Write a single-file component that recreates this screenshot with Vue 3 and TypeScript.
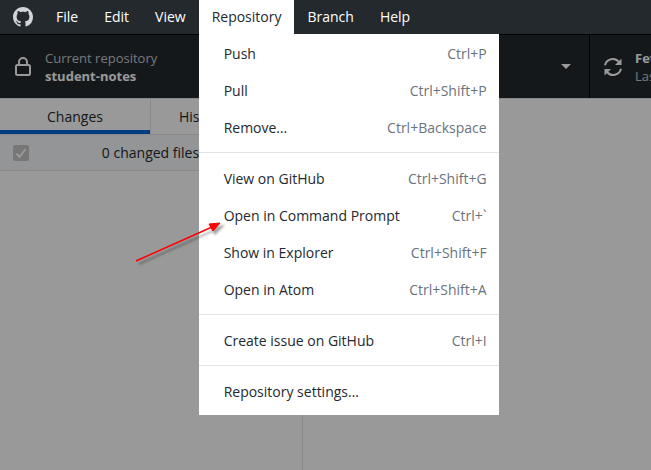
<script setup lang="ts">
interface MenuItem {
  label: string
  keys?: string
}

const before: string[] = ['File', 'Edit', 'View']
const after: string[] = ['Branch', 'Help']

const groups: MenuItem[][] = [
  [
    { label: 'Push', keys: 'Ctrl+P' },
    { label: 'Pull', keys: 'Ctrl+Shift+P' },
    { label: 'Remove…', keys: 'Ctrl+Backspace' },
  ],
  [
    { label: 'View on GitHub', keys: 'Ctrl+Shift+G' },
    { label: 'Open in Command Prompt', keys: 'Ctrl+`' },
    { label: 'Show in Explorer', keys: 'Ctrl+Shift+F' },
    { label: 'Open in Atom', keys: 'Ctrl+Shift+A' },
  ],
  [{ label: 'Create issue on GitHub', keys: 'Ctrl+I' }],
  [{ label: 'Repository settings…' }],
]
</script>

<template>
  <div class="window">
    <header class="titlebar">
      <svg class="logo" viewBox="0 0 16 16" aria-hidden="true">
        <path d="M8 0C3.58 0 0 3.58 0 8c0 3.54 2.29 6.53 5.47 7.59.4.07.55-.17.55-.38 0-.19-.01-.82-.01-1.49-2.01.37-2.53-.49-2.69-.94-.09-.23-.48-.94-.82-1.13-.28-.15-.68-.52-.01-.53.63-.01 1.08.58 1.23.82.72 1.21 1.87.87 2.33.66.07-.52.28-.87.51-1.07-1.78-.2-3.64-.89-3.64-3.95 0-.87.31-1.59.82-2.15-.08-.2-.36-1.02.08-2.12 0 0 .67-.21 2.2.82.64-.18 1.32-.27 2-.27s1.36.09 2 .27c1.53-1.04 2.2-.82 2.2-.82.44 1.1.16 1.92.08 2.12.51.56.82 1.27.82 2.15 0 3.07-1.87 3.75-3.65 3.95.29.25.54.73.54 1.48 0 1.07-.01 1.93-.01 2.2 0 .21.15.46.55.38A8.01 8.01 0 0 0 16 8c0-4.42-3.58-8-8-8z" />
      </svg>
      <nav class="menubar">
        <button v-for="name in before" :key="name" type="button" class="top">{{ name }}</button>
        <div class="holder">
          <button type="button" class="top open" aria-expanded="true">Repository</button>
          <div class="menu" role="menu">
            <div v-for="(group, i) in groups" :key="i" class="group" role="group">
              <button v-for="item in group" :key="item.label" type="button" class="item" role="menuitem">
                <span>{{ item.label }}</span>
                <span v-if="item.keys" class="keys">{{ item.keys }}</span>
              </button>
            </div>
          </div>
        </div>
        <button v-for="name in after" :key="name" type="button" class="top">{{ name }}</button>
      </nav>
    </header>

    <div class="app">
      <div class="toolbar">
        <button type="button" class="tool repo">
          <svg class="lock" viewBox="0 0 16 20" aria-hidden="true">
            <rect x="1" y="8" width="14" height="10" rx="1.5" />
            <path d="M4 8V5a4 4 0 0 1 8 0v3" />
          </svg>
          <span class="lines">
            <span class="dim">Current repository</span>
            <strong>student-notes</strong>
          </span>
        </button>
        <button type="button" class="tool branch">
          <svg class="caret" viewBox="0 0 10 5" aria-hidden="true"><path d="M0 0h10L5 5z" /></svg>
        </button>
        <button type="button" class="tool fetch">
          <svg class="sync" viewBox="0 0 20 20" aria-hidden="true">
            <path class="arc" d="M2 8.2A8 8 0 0 1 16 5M18 11.8A8 8 0 0 1 4 15" />
            <path class="tip" d="M18.500 1.500v6.500h-6.500zM1.500 18.500v-6.500h6.500z" />
          </svg>
          <span class="lines">
            <strong>Fetch origin</strong>
            <span class="dim">Last fetched</span>
          </span>
        </button>
      </div>

      <main class="body">
        <aside class="sidebar">
          <div class="tabs">
            <button type="button" class="tab active">Changes</button>
            <button type="button" class="tab history">History</button>
          </div>
          <div class="changes">
            <span class="box">
              <input id="all" type="checkbox" checked disabled />
              <svg viewBox="0 0 16 16" aria-hidden="true"><path d="M3.500 8.500l3 3.500L12.500 4" /></svg>
            </span>
            <label for="all">0 changed files</label>
          </div>
        </aside>
        <section class="content"></section>
      </main>
      <div class="shade"></div>
    </div>

    <svg class="pointer" viewBox="0 0 100 60" aria-hidden="true">
      <g class="shadow" transform="translate(3 3)">
        <path d="M6 51L82 17" />
        <path class="head" d="M90 13l-8 8-3-6z" />
      </g>
      <path class="shaft" d="M6 51L82 17" />
      <path class="arrowhead" d="M90 13l-7 8-4-7z" />
    </svg>
  </div>
</template>

<style>
body {
  margin: 0;
}
</style>

<style scoped>
.window {
  position: relative;
  display: flex;
  flex-direction: column;
  min-height: 100vh;
  overflow: hidden;
  font-family: 'Open Sans', 'Noto Sans', sans-serif;
  font-size: 14px;
  line-height: 18px;
  color: #24292e;
}
button {
  margin: 0;
  border: 0;
  padding: 0;
  background: none;
  font: inherit;
  color: inherit;
  text-align: left;
  white-space: nowrap;
}
.titlebar {
  display: flex;
  align-items: center;
  height: 34px;
  background: #24292e;
  border-bottom: 1px solid #000;
}
.logo {
  flex: none;
  width: 20px;
  height: 20px;
  margin: 0 10px 0 13px;
  fill: #d1d5da;
}
.menubar {
  display: flex;
  height: 34px;
}
.top {
  height: 34px;
  padding: 0 13px;
  color: #fff;
}
.holder {
  position: relative;
}
.top.open {
  background: #fff;
  color: #24292e;
}
.menu {
  position: absolute;
  z-index: 3;
  top: 34px;
  left: 0;
  width: 300px;
  background: #fff;
}
.group {
  display: grid;
  grid-auto-rows: 37px;
  padding: 7px 0 6px;
  border-bottom: 1px solid #e1e4e8;
}
.group:first-child {
  padding-top: 1px;
}
.group:last-child {
  padding-bottom: 5px;
  border-bottom: 0;
}
.item {
  display: flex;
  align-items: center;
  justify-content: space-between;
  padding: 0 12px 0 25px;
}
.keys {
  color: #6a737d;
}
.app {
  position: relative;
  flex: 1;
  display: flex;
  flex-direction: column;
}
.toolbar {
  display: flex;
  height: 63px;
  background: #24292e;
  color: #fff;
}
.tool {
  display: flex;
  align-items: center;
  overflow: hidden;
}
.lines {
  display: flex;
  flex-direction: column;
  font-size: 13px;
}
.dim {
  color: #c3c8ce;
}
.repo {
  width: 303px;
  gap: 14px;
  padding-left: 15px;
}
.lock {
  width: 16px;
  height: 20px;
  fill: none;
  stroke: #fff;
  stroke-width: 2;
}
.branch {
  width: 287px;
  justify-content: flex-end;
  padding-right: 18px;
  border-right: 1px solid #000;
  box-sizing: border-box;
}
.caret {
  width: 10px;
  height: 5px;
  fill: #fff;
}
.fetch {
  flex: 1;
  min-width: 0;
  gap: 12px;
  padding-left: 13px;
}
.sync {
  flex: none;
  width: 20px;
  height: 20px;
}
.arc {
  fill: none;
  stroke: #fff;
  stroke-width: 2;
}
.tip {
  fill: #fff;
}
.body {
  flex: 1;
  display: flex;
  background: #fff;
  border-top: 1px solid #e1e4e8;
}
.sidebar {
  width: 302px;
  border-right: 1px solid #e1e4e8;
}
.content {
  flex: 1;
}
.tabs {
  display: grid;
  grid-template-columns: 150fr 152fr;
  height: 35px;
  border-bottom: 1px solid #e1e4e8;
}
.tab {
  text-align: center;
}
.tab.active {
  box-shadow: inset 0 -4px #0366d6, 1px 0 #e1e4e8;
}
.tab.history {
  padding-left: 29px;
  text-align: left;
}
.changes {
  display: flex;
  align-items: center;
  height: 35px;
  padding-left: 13px;
  background: #f6f8fa;
  border-bottom: 1px solid #e1e4e8;
}
.changes label {
  flex: 1;
  text-align: center;
  padding-right: 30px;
}
.box {
  display: grid;
  width: 16px;
  height: 16px;
}
.box input,
.box svg {
  grid-area: 1 / 1;
  width: 16px;
  height: 16px;
  margin: 0;
}
.box input {
  appearance: none;
  border-radius: 2px;
  background: #c6c6c6;
}
.box path {
  fill: none;
  stroke: #fff;
  stroke-width: 2;
}
.shade {
  position: absolute;
  inset: 0;
  z-index: 1;
  background: rgba(0, 0, 0, 0.4);
}
.pointer {
  position: absolute;
  z-index: 4;
  left: 130px;
  top: 210px;
  width: 100px;
  height: 60px;
  pointer-events: none;
}
.pointer path {
  fill: none;
  stroke-width: 1.5;
}
.shadow {
  filter: blur(1px);
  opacity: 0.35;
}
.shadow path {
  stroke: #000;
}
.shadow .head {
  fill: #000;
}
.pointer .shaft {
  stroke: #f00;
}
.pointer .arrowhead {
  fill: #f00;
  stroke: #f00;
  stroke-width: 1;
}
</style>
